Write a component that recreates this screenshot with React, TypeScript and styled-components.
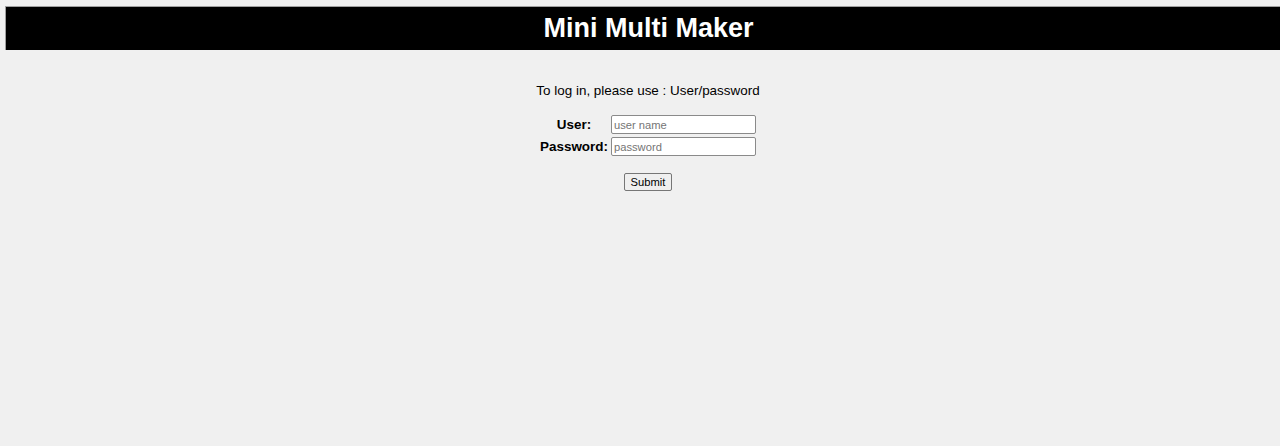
import React from "react";
import styled, { createGlobalStyle } from "styled-components";

const GlobalStyle = createGlobalStyle`
  html, body {
    margin: 0;
    padding: 0;
    overflow: hidden;
    background: #f0f0f0;
  }
  body {
    font-family: "Liberation Sans", Arial, sans-serif;
    color: #000;
  }
`;

const Page = styled.div`
  width: 1286px;
  height: 446px;
  padding: 6px 0 0 5px;
  box-sizing: content-box;
  display: flex;
  flex-direction: column;
  align-items: stretch;
`;

const Header = styled.header`
  height: 43px;
  background: #000;
  border-top: 1px solid #a0a0a0;
  border-left: 1px solid #a0a0a0;
  display: flex;
  align-items: center;
  justify-content: center;
`;

const Title = styled.h1`
  margin: 0;
  font-size: 27px;
  font-weight: bold;
  color: #fff;
  line-height: 31px;
`;

const Main = styled.main`
  display: flex;
  flex-direction: column;
  align-items: center;
  padding-top: 33px;
`;

const Message = styled.p`
  margin: 0;
  font-size: 13.45px;
  line-height: 15px;
`;

const Form = styled.form`
  display: flex;
  flex-direction: column;
  align-items: center;
  margin-top: 17px;
`;

const Fields = styled.div`
  display: grid;
  grid-template-columns: auto auto;
  column-gap: 3px;
  row-gap: 3px;
  align-items: center;
`;

const Label = styled.label`
  font-size: 13.45px;
  font-weight: bold;
  text-align: center;
  line-height: 15px;
`;

const Input = styled.input`
  box-sizing: border-box;
  width: 145px;
  height: 19px;
  margin: 0;
  padding: 1px 2px;
  font-family: "Liberation Sans", Arial, sans-serif;
  font-size: 11.2px;
  border: 1px solid #8a8a8a;
  border-radius: 2px;
  background: #fff;
  &::placeholder {
    color: #757575;
  }
`;

const SubmitButton = styled.button`
  margin-top: 17px;
  box-sizing: border-box;
  height: 18px;
  padding: 0 6px;
  font-family: "Liberation Sans", Arial, sans-serif;
  font-size: 11.2px;
  color: #000;
  background: #efefef;
  border: 1px solid #767676;
  border-radius: 2px;
`;

export default function App() {
  return (
    <>
      <GlobalStyle />
      <Page>
        <Header>
          <Title>Mini Multi Maker</Title>
        </Header>
        <Main>
          <Message>To log in, please use : User/password</Message>
          <Form onSubmit={(e) => e.preventDefault()}>
            <Fields>
              <Label htmlFor="user">User:</Label>
              <Input id="user" type="text" placeholder="user name" />
              <Label htmlFor="password">Password:</Label>
              <Input id="password" type="password" placeholder="password" />
            </Fields>
            <SubmitButton type="submit">Submit</SubmitButton>
          </Form>
        </Main>
      </Page>
    </>
  );
}
